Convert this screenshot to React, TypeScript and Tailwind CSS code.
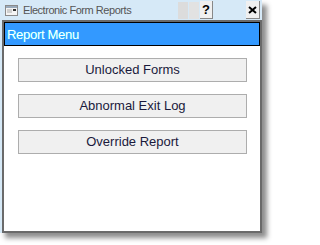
import React from 'react'

const items = ['Unlocked Forms', 'Abnormal Exit Log', 'Override Report']

function WinIcon() {
    return (
        <svg width="13" height="11" viewBox="0 0 13 11" className="shrink-0">
            <rect x="0.5" y="0.5" width="12" height="10" fill="#f4f4f4" stroke="#8a8a8a" />
            <rect x="1" y="1" width="11" height="2" fill="#9ab" />
            <rect x="2" y="4" width="5" height="4" fill="#cfcfcf" />
            <rect x="8" y="4" width="3" height="2" fill="#333" />
        </svg>
    )
}

export default function App() {
    return (
        <div className="w-[274px] h-[245px] bg-white" style={{ fontFamily: '"Liberation Sans", Arial, sans-serif' }}>
            <div className="w-[262px] h-[233px] flex flex-col bg-[#d6e9f7] pl-[2px] shadow-[5px_5px_5px_rgba(0,0,0,0.45)]">
                {/* title bar */}
                <div className="h-[20px] flex items-center shrink-0">
                    <div className="ml-[3px] mt-[1px]"><WinIcon /></div>
                    <span className="ml-[5px] text-[11px] text-[#555] tracking-[-0.45px]">
                        Electronic Form Reports
                    </span>
                    <div className="ml-auto flex items-center h-full">
                        <div className="w-[10px] h-[17px] bg-[#dcdcdc]" />
                        <div className="w-[10px] h-[17px] bg-[#e2e2e2] ml-[1px]" />
                        <div className="w-[13px] h-[18px] ml-[1px] bg-[#f0f0f0] border-r border-b border-[#888] flex items-center justify-center text-[13px] font-bold text-black">?</div>
                        <div className="w-[33px]" />
                        <div className="w-[14px] h-[18px] bg-[#f0f0f0] border-r border-b border-[#888] flex items-center justify-center mr-[2px]">
                            <svg width="9" height="8" viewBox="0 0 9 8">
                                <path d="M1 1 L8 7 M8 1 L1 7" stroke="#000" strokeWidth="2" />
                            </svg>
                        </div>
                    </div>
                </div>
                {/* body */}
                <div className="flex-1 flex flex-col bg-white border-2 border-[#6a6a6a]">
                    <div className="h-[24px] bg-[#3399ff] border border-black flex items-center pl-[2px] shrink-0">
                        <span className="text-white text-[13px] leading-none tracking-[-0.3px]" style={{ textShadow: '0 0 1px #0ff' }}>Report Menu</span>
                    </div>
                    <div className="flex flex-col gap-[12px] pt-[12px] pl-[14px] pr-[13px]">
                        {items.map(label => (
                            <button
                                key={label}
                                className="h-[24px] w-full bg-[#f0f0f0] border border-[#adadad] text-[13px] text-[#1a1a3c] flex items-center justify-center"
                            >
                                {label}
                            </button>
                        ))}
                    </div>
                </div>
            </div>
        </div>
    )
}
